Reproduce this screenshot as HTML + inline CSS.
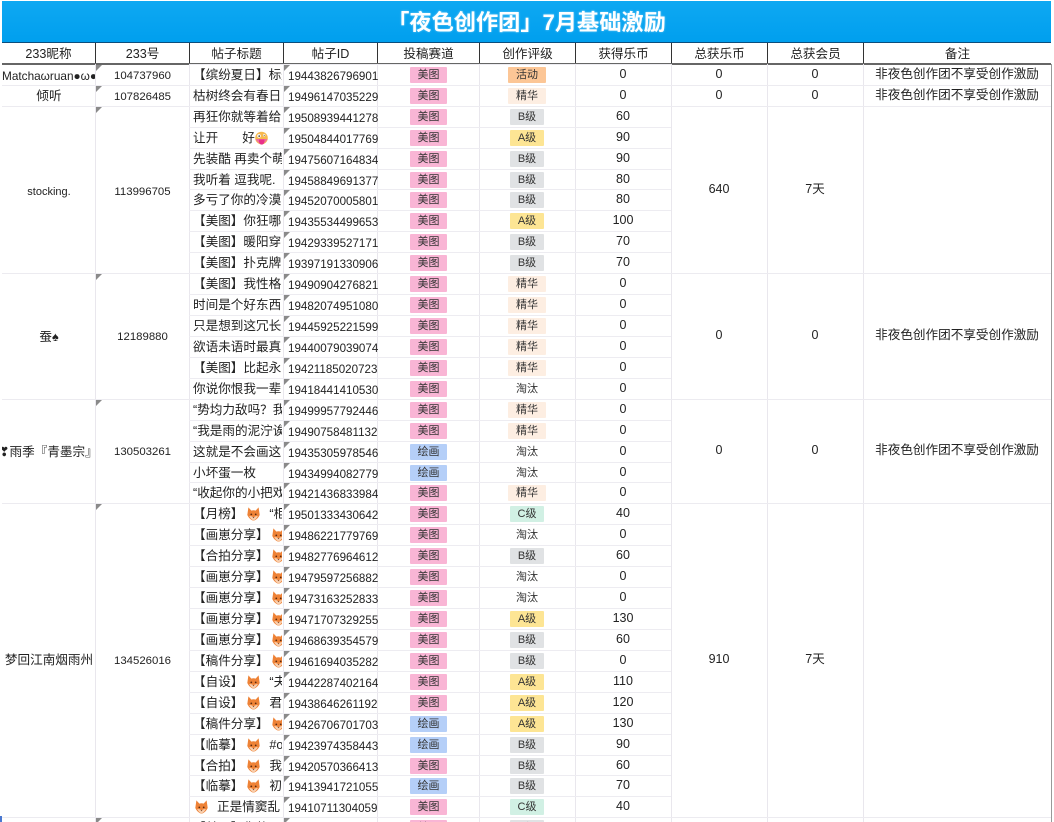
<!DOCTYPE html>
<html lang="zh-CN"><head><meta charset="utf-8"><title>夜色创作团</title>
<style>
html,body{margin:0;padding:0;background:#fff;width:1054px;height:822px;overflow:hidden}
#w{width:1054px;height:822px;position:relative;overflow:hidden;font-family:"Liberation Sans","Noto Sans CJK SC",sans-serif;color:#222;filter:blur(.3px)}
.tt{position:absolute;left:2px;top:1px;width:1049px;height:41px;background:linear-gradient(#0ea8f2,#009fee);color:#fff;font:bold 22.2px/44px "Liberation Sans","Noto Sans CJK SC",sans-serif;text-align:center;text-shadow:0 0 2px rgba(255,255,255,.45)}
.tl{position:absolute;left:2px;top:42px;width:1049px;height:1px;background:#0b4d7c}
.hb{position:absolute;left:2px;top:63px;width:1049px;height:1.5px;background:#666}
.h{position:absolute;top:43px;height:20px;font-size:12.6px;line-height:22px;text-align:center;color:#222;border-right:1px solid #333;box-sizing:border-box}
.v{position:absolute;top:64px;height:758px;width:1px;background:#e9e7ed}
.l{position:absolute;height:1px;background:#ecebf0}
.r{position:absolute;left:0;width:1054px;height:21px}
.r:before{content:"";position:absolute;left:189px;width:482px;top:0;height:1px;background:#edecf1}
.ti{position:absolute;left:190px;top:0;width:89px;padding-left:3px;height:21px;overflow:hidden;white-space:pre;font-size:12.6px;line-height:23px;color:#222}
.ti svg{width:13px;height:14px;vertical-align:-3px}
.id{position:absolute;left:288px;top:0;font-size:11.6px;line-height:25px;color:#222;white-space:nowrap}
.id:before{content:"";position:absolute;left:-4px;top:1px;border-top:6px solid #8a8a8a;border-right:6px solid transparent}
.p{position:absolute;top:3px;height:16px;font-size:11px;line-height:16px;text-align:center;color:#333;border-radius:1px}
.m{left:410px;width:37px;background:#f9b5d5}
.d{left:410px;width:37px;background:#b5cff8}
.g{left:510px;width:34px}
.w{left:508px;width:38px}
.A{background:#fde594}.B{background:#e0e2e4}.C{background:#d1f0e4}
.H{background:#fcc696}.J{background:#fdeee2}.T{background:#fff}
.c{position:absolute;left:575px;width:96px;top:0;text-align:center;font-size:12.5px;line-height:20px;color:#222}
.a{position:absolute;text-align:center;white-space:nowrap;overflow:hidden;color:#222}
.n1{left:3px;width:92px;font-size:12.6px;line-height:20px}
.n2{left:96px;width:93px;font-size:11.4px;line-height:20px}
.n3{left:671px;width:96px;font-size:12.5px;line-height:20px}
.n4{left:767px;width:96px;font-size:12.5px;line-height:20px}
.n5{left:863px;width:188px;font-size:12.6px;line-height:20px}
.tr{position:absolute;left:96px;border-top:6px solid #8a8a8a;border-right:6px solid transparent}
</style></head><body>
<svg width="0" height="0" style="position:absolute"><defs>
<symbol id="f" viewBox="0 0 13 14"><path d="M1.4 .4L4.4 3.6Q6.5 2.8 8.6 3.6L11.6 .4L12.7 8Q10.6 12.6 6.5 13.8Q2.4 12.6 .3 8Z" fill="#ee8236"/><path d="M2.2 9Q4.6 8.8 6.5 10.4Q8.4 8.8 10.8 9Q9.2 12.4 6.5 13.5Q3.8 12.4 2.2 9Z" fill="#f9cfae"/><circle cx="4.3" cy="7.4" r=".9" fill="#5a2a10"/><circle cx="8.7" cy="7.4" r=".9" fill="#5a2a10"/><path d="M5.6 10.2H7.4L6.5 11.3Z" fill="#5a2a10"/></symbol>
<symbol id="e" viewBox="0 0 13 13"><circle cx="6.5" cy="6.5" r="6.3" fill="#f6b94e"/><path d="M0.6 7.5A6.2 6.2 0 0 0 12.4 7.5Z" fill="#f0709a"/><path d="M4 8H9.4V10.4A2.7 2.7 0 0 1 4 10.4Z" fill="#e8308a"/><circle cx="4" cy="4.4" r="1.8" fill="#fff"/><circle cx="9.2" cy="3.8" r="1.2" fill="#fff"/><circle cx="4.2" cy="4.6" r=".8" fill="#333"/><circle cx="9.2" cy="3.9" r=".5" fill="#333"/></symbol>
</defs></svg>
<div id="w">
<div class="tt">「夜色创作团」7月基础激励</div><div class="tl"></div>
<div class="h" style="left:2px;width:94px">233昵称</div>
<div class="h" style="left:96px;width:94px">233号</div>
<div class="h" style="left:190px;width:94px">帖子标题</div>
<div class="h" style="left:284px;width:94px">帖子ID</div>
<div class="h" style="left:378px;width:102px">投稿赛道</div>
<div class="h" style="left:480px;width:96px">创作评级</div>
<div class="h" style="left:576px;width:96px">获得乐币</div>
<div class="h" style="left:672px;width:96px">总获乐币</div>
<div class="h" style="left:768px;width:96px">总获会员</div>
<div class="h" style="left:864px;width:187px;border-right:0">备注</div>
<div class="hb"></div>

<div class="v" style="left:95px"></div><div class="v" style="left:189px"></div><div class="v" style="left:283px"></div><div class="v" style="left:377px"></div><div class="v" style="left:479px"></div><div class="v" style="left:575px"></div><div class="v" style="left:671px"></div><div class="v" style="left:767px"></div><div class="v" style="left:863px"></div>
<div class="v" style="left:1051px;background:#999"></div>

<div class="l" style="left:2px;width:1049px;top:85px"></div>
<div class="l" style="left:2px;width:1049px;top:106px"></div>
<div class="l" style="left:2px;width:1049px;top:273px"></div>
<div class="l" style="left:2px;width:1049px;top:399px"></div>
<div class="l" style="left:2px;width:1049px;top:503px"></div>
<div class="l" style="left:2px;width:1049px;top:817px"></div>
<div style="position:absolute;left:0;top:816px;width:2px;height:6px;background:#4a78d0"></div>

<div class="r" style="top:64px"><div class="ti">【缤纷夏日】标题</div><div class="id">19443826796901</div><div class="p m">美图</div><div class="p w H">活动</div><div class="c">0</div></div>
<div class="r" style="top:85px"><div class="ti">枯树终会有春日</div><div class="id">19496147035229</div><div class="p m">美图</div><div class="p w J">精华</div><div class="c">0</div></div>
<div class="r" style="top:106px"><div class="ti">再狂你就等着给</div><div class="id">19508939441278</div><div class="p m">美图</div><div class="p g B">B级</div><div class="c">60</div></div>
<div class="r" style="top:127px"><div class="ti">让开<span style="margin-left:24px">好</span><svg style="width:13px"><use href="#e"/></svg></div><div class="id">19504844017769</div><div class="p m">美图</div><div class="p g A">A级</div><div class="c">90</div></div>
<div class="r" style="top:148px"><div class="ti">先装酷 再卖个萌</div><div class="id">19475607164834</div><div class="p m">美图</div><div class="p g B">B级</div><div class="c">90</div></div>
<div class="r" style="top:169px"><div class="ti">我听着 逗我呢.</div><div class="id">19458849691377</div><div class="p m">美图</div><div class="p g B">B级</div><div class="c">80</div></div>
<div class="r" style="top:189px"><div class="ti">多亏了你的冷漠</div><div class="id">19452070005801</div><div class="p m">美图</div><div class="p g B">B级</div><div class="c">80</div></div>
<div class="r" style="top:210px"><div class="ti">【美图】你狂哪</div><div class="id">19435534499653</div><div class="p m">美图</div><div class="p g A">A级</div><div class="c">100</div></div>
<div class="r" style="top:231px"><div class="ti">【美图】暖阳穿</div><div class="id">19429339527171</div><div class="p m">美图</div><div class="p g B">B级</div><div class="c">70</div></div>
<div class="r" style="top:252px"><div class="ti">【美图】扑克牌</div><div class="id">19397191330906</div><div class="p m">美图</div><div class="p g B">B级</div><div class="c">70</div></div>
<div class="r" style="top:273px"><div class="ti">【美图】我性格</div><div class="id">19490904276821</div><div class="p m">美图</div><div class="p w J">精华</div><div class="c">0</div></div>
<div class="r" style="top:294px"><div class="ti">时间是个好东西</div><div class="id">19482074951080</div><div class="p m">美图</div><div class="p w J">精华</div><div class="c">0</div></div>
<div class="r" style="top:315px"><div class="ti">只是想到这冗长</div><div class="id">19445925221599</div><div class="p m">美图</div><div class="p w J">精华</div><div class="c">0</div></div>
<div class="r" style="top:336px"><div class="ti">欲语未语时最真</div><div class="id">19440079039074</div><div class="p m">美图</div><div class="p w J">精华</div><div class="c">0</div></div>
<div class="r" style="top:357px"><div class="ti">【美图】比起永</div><div class="id">19421185020723</div><div class="p m">美图</div><div class="p w J">精华</div><div class="c">0</div></div>
<div class="r" style="top:378px"><div class="ti">你说你恨我一辈</div><div class="id">19418441410530</div><div class="p m">美图</div><div class="p w T">淘汰</div><div class="c">0</div></div>
<div class="r" style="top:399px"><div class="ti">“势均力敌吗？我</div><div class="id">19499957792446</div><div class="p m">美图</div><div class="p w J">精华</div><div class="c">0</div></div>
<div class="r" style="top:420px"><div class="ti">“我是雨的泥泞诶</div><div class="id">19490758481132</div><div class="p m">美图</div><div class="p w J">精华</div><div class="c">0</div></div>
<div class="r" style="top:441px"><div class="ti">这就是不会画这</div><div class="id">19435305978546</div><div class="p d">绘画</div><div class="p w T">淘汰</div><div class="c">0</div></div>
<div class="r" style="top:462px"><div class="ti">小坏蛋一枚</div><div class="id">19434994082779</div><div class="p d">绘画</div><div class="p w T">淘汰</div><div class="c">0</div></div>
<div class="r" style="top:482px"><div class="ti">“收起你的小把戏</div><div class="id">19421436833984</div><div class="p m">美图</div><div class="p w J">精华</div><div class="c">0</div></div>
<div class="r" style="top:503px"><div class="ti">【月榜】<svg style="margin-left:4px"><use href="#f"/></svg><span style="margin-left:9px">“柜</span></div><div class="id">19501333430642</div><div class="p m">美图</div><div class="p g C">C级</div><div class="c">40</div></div>
<div class="r" style="top:524px"><div class="ti">【画崽分享】<svg style="margin-left:3px"><use href="#f"/></svg></div><div class="id">19486221779769</div><div class="p m">美图</div><div class="p w T">淘汰</div><div class="c">0</div></div>
<div class="r" style="top:545px"><div class="ti">【合拍分享】<svg style="margin-left:3px"><use href="#f"/></svg></div><div class="id">19482776964612</div><div class="p m">美图</div><div class="p g B">B级</div><div class="c">60</div></div>
<div class="r" style="top:566px"><div class="ti">【画崽分享】<svg style="margin-left:3px"><use href="#f"/></svg></div><div class="id">19479597256882</div><div class="p m">美图</div><div class="p w T">淘汰</div><div class="c">0</div></div>
<div class="r" style="top:587px"><div class="ti">【画崽分享】<svg style="margin-left:3px"><use href="#f"/></svg></div><div class="id">19473163252833</div><div class="p m">美图</div><div class="p w T">淘汰</div><div class="c">0</div></div>
<div class="r" style="top:608px"><div class="ti">【画崽分享】<svg style="margin-left:3px"><use href="#f"/></svg></div><div class="id">19471707329255</div><div class="p m">美图</div><div class="p g A">A级</div><div class="c">130</div></div>
<div class="r" style="top:629px"><div class="ti">【画崽分享】<svg style="margin-left:3px"><use href="#f"/></svg></div><div class="id">19468639354579</div><div class="p m">美图</div><div class="p g B">B级</div><div class="c">60</div></div>
<div class="r" style="top:650px"><div class="ti">【稿件分享】<svg style="margin-left:3px"><use href="#f"/></svg></div><div class="id">19461694035282</div><div class="p m">美图</div><div class="p g B">B级</div><div class="c">0</div></div>
<div class="r" style="top:671px"><div class="ti">【自设】<svg style="margin-left:4px"><use href="#f"/></svg><span style="margin-left:9px">“夫</span></div><div class="id">19442287402164</div><div class="p m">美图</div><div class="p g A">A级</div><div class="c">110</div></div>
<div class="r" style="top:692px"><div class="ti">【自设】<svg style="margin-left:4px"><use href="#f"/></svg><span style="margin-left:9px">君子</span></div><div class="id">19438646261192</div><div class="p m">美图</div><div class="p g A">A级</div><div class="c">120</div></div>
<div class="r" style="top:713px"><div class="ti">【稿件分享】<svg style="margin-left:3px"><use href="#f"/></svg></div><div class="id">19426706701703</div><div class="p d">绘画</div><div class="p g A">A级</div><div class="c">130</div></div>
<div class="r" style="top:734px"><div class="ti">【临摹】<svg style="margin-left:4px"><use href="#f"/></svg><span style="margin-left:9px">#oc</span></div><div class="id">19423974358443</div><div class="p d">绘画</div><div class="p g B">B级</div><div class="c">90</div></div>
<div class="r" style="top:755px"><div class="ti">【合拍】<svg style="margin-left:4px"><use href="#f"/></svg><span style="margin-left:9px">我还</span></div><div class="id">19420570366413</div><div class="p m">美图</div><div class="p g B">B级</div><div class="c">60</div></div>
<div class="r" style="top:775px"><div class="ti">【临摹】<svg style="margin-left:4px"><use href="#f"/></svg><span style="margin-left:9px">初夏</span></div><div class="id">19413941721055</div><div class="p d">绘画</div><div class="p g B">B级</div><div class="c">70</div></div>
<div class="r" style="top:796px"><div class="ti"><svg style="margin-left:2px"><use href="#f"/></svg><span style="margin-left:9px">正是情窦乱</span></div><div class="id">19410711304059</div><div class="p m">美图</div><div class="p g C">C级</div><div class="c">40</div></div>
<div class="r" style="top:817px"><div class="ti">【美图】你的</div><div class="id">19408811304166</div><div class="p m">美图</div><div class="p g B">B级</div><div class="c">80</div></div>

<i class="tr" style="top:65px"></i><i class="tr" style="top:86px"></i><i class="tr" style="top:107px"></i><i class="tr" style="top:274px"></i><i class="tr" style="top:400px"></i><i class="tr" style="top:504px"></i><i class="tr" style="top:818px"></i>

<div class="a n1" style="left:2px;width:93px;top:66px;font-size:11.8px;text-align:left">Matchaωruan●ω●</div>
<div class="a n2" style="top:66px">104737960</div>
<div class="a n3" style="top:64px">0</div><div class="a n4" style="top:64px">0</div><div class="a n5" style="top:64px">非夜色创作团不享受创作激励</div>
<div class="a n1" style="top:86px">倾听</div>
<div class="a n2" style="top:87px">107826485</div>
<div class="a n3" style="top:85px">0</div><div class="a n4" style="top:85px">0</div><div class="a n5" style="top:85px">非夜色创作团不享受创作激励</div>

<div class="a n1" style="top:182px;font-size:11px">stocking.</div>
<div class="a n2" style="top:182px">113996705</div>
<div class="a n3" style="top:179px">640</div><div class="a n4" style="top:179px">7天</div>

<div class="a n1" style="top:327px">蚕♠</div>
<div class="a n2" style="top:327px">12189880</div>
<div class="a n3" style="top:325px">0</div><div class="a n4" style="top:325px">0</div><div class="a n5" style="top:325px">非夜色创作团不享受创作激励</div>

<div class="a n1" style="left:2px;width:93px;text-align:left;top:442px;text-indent:-3px">❣雨季『青墨宗』</div>
<div class="a n2" style="top:442px">130503261</div>
<div class="a n3" style="top:440px">0</div><div class="a n4" style="top:440px">0</div><div class="a n5" style="top:440px">非夜色创作团不享受创作激励</div>

<div class="a n1" style="top:650px">梦回江南烟雨州</div>
<div class="a n2" style="top:651px">134526016</div>
<div class="a n3" style="top:649px">910</div><div class="a n4" style="top:649px">7天</div>
</div>
</body></html>
